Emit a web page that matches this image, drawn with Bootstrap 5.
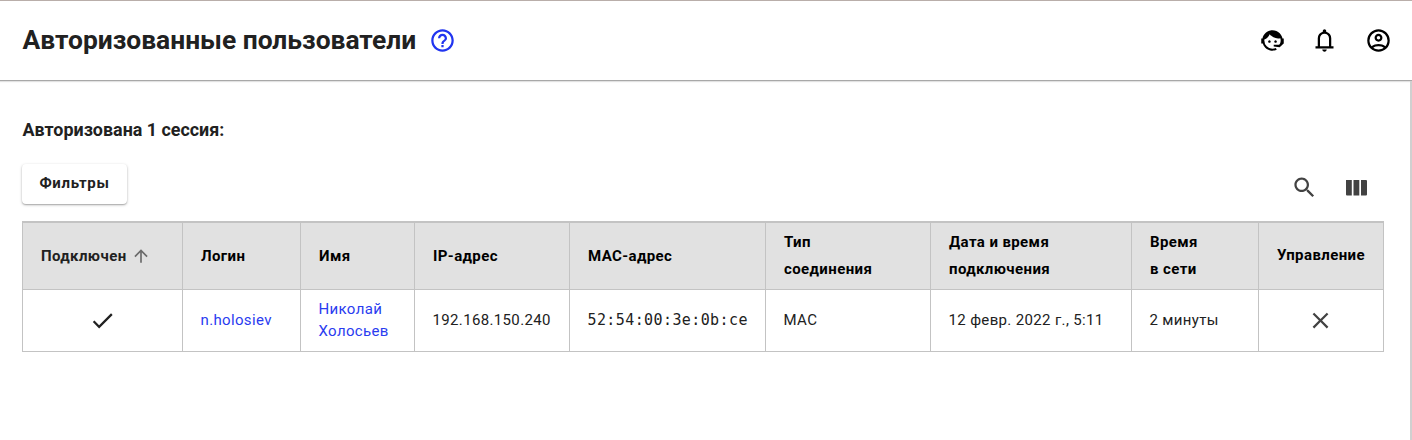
<!DOCTYPE html>
<html lang="ru">
<head>
<meta charset="utf-8">
<title>Авторизованные пользователи</title>
<link href="https://cdn.jsdelivr.net/npm/bootstrap@5.3.0/dist/css/bootstrap.min.css" rel="stylesheet">
<style>
body{font-family:Roboto,sans-serif;font-size:15px;color:#212121;background:#fff;min-height:440px;overflow:hidden;letter-spacing:.4px}
.topbar{height:81px;border-top:1px solid #b9aeaa;border-bottom:1px solid #a8a8a8;box-shadow:0 1px 1px #e2e2e2;padding:0 20px 0 22.5px}
.page-title{font-size:26.4px;font-weight:700;letter-spacing:0;line-height:32px;padding-bottom:2px}
.ico{width:27px;height:27px;fill:currentColor;display:block;flex:none}
.content-area{height:359px;border-right:2px solid #d0d0d0;padding:37px 26px 0 22px}
.session-title{font-size:17.9px;font-weight:700;letter-spacing:0;line-height:24px;padding-left:.5px}
.btn-filter{height:40px;width:105px;font-size:15px;font-weight:700;letter-spacing:.7px;line-height:20px;padding:0 0 2px;border:0;border-radius:4px;background:#fff;color:#212121;box-shadow:0 1px 3px rgba(0,0,0,.26),0 1px 1px rgba(0,0,0,.16)}
.tools{gap:25px;color:#424242;padding-right:14px;padding-top:7px}
.sessions{width:1362px;table-layout:fixed;border-collapse:separate;border-spacing:0;border-top:1px solid #c3c3c3}
.sessions th,.sessions td{border-left:1px solid #c3c3c3;border-bottom:1px solid #c3c3c3;padding:0 0 0 17.5px;vertical-align:middle}
.sessions th:last-child,.sessions td:last-child{border-right:1px solid #c3c3c3}
.sessions th{height:68px;border-top:1px solid #c3c3c3;background:#e1e1e1;color:#000;font-weight:700;line-height:27px;letter-spacing:.4px;padding-left:18px}
.sessions th:last-child{padding-bottom:2px}
.sessions td{height:62px;line-height:22px;padding-bottom:2px;letter-spacing:.35px}
.sessions a{color:#2a3cf0;text-decoration:none}
.sessions .mac-addr{font-family:"DejaVu Sans Mono",monospace;letter-spacing:.4px}
.blue{color:#2135f0;margin-left:13px}
</style>
</head>
<body>
<header class="topbar d-flex align-items-center justify-content-between">
  <div class="d-flex align-items-center">
    <h1 class="page-title mb-0">Авторизованные пользователи</h1>
    <svg class="ico blue" viewBox="0 0 24 24"><path d="M11 18h2v-2h-2v2zm1-16C6.48 2 2 6.48 2 12s4.480 10 10 10 10-4.480 10-10S17.520 2 12 2zm0 18c-4.410 0-8-3.590-8-8s3.590-8 8-8 8 3.590 8 8-3.590 8-8 8zm0-14c-2.210 0-4 1.790-4 4h2c0-1.100.9-2 2-2s2 .9 2 2c0 2-3 1.750-3 5h2c0-2.250 3-2.500 3-5 0-2.210-1.790-4-4-4z"/></svg>
  </div>
  <div class="d-flex align-items-center text-black">
    <svg class="ico" style="margin-right:25px" viewBox="0 0 24 24"><path d="M18.720 14.760C19.070 13.910 19.260 13 19.260 12C19.260 11.280 19.150 10.590 18.960 9.950C18.310 10.100 17.630 10.180 16.920 10.180C13.860 10.180 11.150 8.670 9.500 6.340C8.610 8.500 6.910 10.260 4.770 11.220C4.730 11.470 4.730 11.740 4.730 12A7.270 7.270 0 0 0 12 19.270C13.050 19.270 14.060 19.040 14.970 18.630C15.540 19.720 15.800 20.260 15.780 20.260C14.140 20.810 12.870 21.080 12 21.080C9.580 21.080 7.270 20.130 5.570 18.420C4.530 17.380 3.760 16.110 3.330 14.730H2V10.180H3.090C3.930 6.040 7.600 2.920 12 2.920C14.400 2.920 16.710 3.870 18.420 5.580C19.690 6.840 20.540 8.450 20.890 10.180H22V14.730H21.940L18.380 18L13.080 17.400V15.730H17.910L18.720 14.760M9.270 11.770A1.140 1.140 0 1 1 9.260 11.770M14.720 11.770A1.140 1.140 0 1 1 14.710 11.770Z"/></svg>
    <svg class="ico" style="margin-right:27px" viewBox="0 0 24 24"><path d="M4 19v-2h2v-7q0-2.075 1.250-3.687Q8.500 4.700 10.500 4.200v-.7q0-.625.438-1.062Q11.375 2 12 2t1.062.438q.438.437.438 1.062v.7q2 .5 3.250 2.113Q18 7.925 18 10v7h2v2Zm8 3q-.825 0-1.412-.587Q10 20.825 10 20h4q0 .825-.587 1.413Q12.825 22 12 22Zm-4-5h8v-7q0-1.650-1.175-2.825Q13.650 6 12 6q-1.650 0-2.825 1.175Q8 8.350 8 10Z"/></svg>
    <svg class="ico" viewBox="0 0 24 24"><path d="M5.850 17.100q1.275-.975 2.850-1.538Q10.275 15 12 15t3.300.562q1.575.563 2.850 1.538.875-1.025 1.363-2.325Q20 13.475 20 12q0-3.325-2.337-5.663Q15.325 4 12 4T6.338 6.337Q4 8.675 4 12q0 1.475.488 2.775.487 1.300 1.362 2.325ZM12 13q-1.475 0-2.488-1.012Q8.500 10.975 8.500 9.500t1.012-2.488Q10.525 6 12 6t2.488 1.012Q15.500 8.025 15.500 9.500t-1.012 2.488Q13.475 13 12 13Zm0 9q-2.075 0-3.900-.788-1.825-.787-3.175-2.137-1.350-1.350-2.137-3.175Q2 14.075 2 12t.788-3.900q.787-1.825 2.137-3.175 1.350-1.350 3.175-2.138Q9.925 2 12 2t3.900.787q1.825.788 3.175 2.138 1.350 1.350 2.137 3.175Q22 9.925 22 12t-.788 3.900q-.787 1.825-2.137 3.175-1.350 1.350-3.175 2.137Q14.075 22 12 22Zm0-2q1.325 0 2.500-.388 1.175-.387 2.150-1.112-.975-.725-2.150-1.113Q13.325 17 12 17t-2.500.387q-1.175.388-2.150 1.113.975.725 2.150 1.112Q10.675 20 12 20Zm0-9q.65 0 1.075-.425.425-.425.425-1.075 0-.65-.425-1.075Q12.650 8 12 8q-.65 0-1.075.425Q10.500 8.850 10.500 9.500q0 .65.425 1.075Q11.350 11 12 11Z"/></svg>
  </div>
</header>
<main class="content-area">
  <h2 class="session-title mb-0">Авторизована 1 сессия:</h2>
  <div class="d-flex justify-content-between align-items-center" style="margin:22px 0 17px">
    <button class="btn btn-filter" type="button">Фильтры</button>
    <div class="tools d-flex align-items-center">
      <svg class="ico" viewBox="0 0 24 24"><path d="M15.500 14h-.79l-.28-.27C15.410 12.590 16 11.110 16 9.500 16 5.910 13.090 3 9.500 3S3 5.910 3 9.500 5.910 16 9.500 16c1.610 0 3.090-.59 4.230-1.570l.27.28v.79l5 4.990L20.490 19l-4.990-5zm-6 0C7.010 14 5 11.990 5 9.500S7.010 5 9.500 5 14 7.010 14 9.500 11.990 14 9.500 14z"/></svg>
      <svg class="ico" viewBox="0 0 27 27"><path d="M3 6h5.800v15.500H4a1 1 0 0 1-1-1zM10.500 6h5.800v15.500h-5.800zM18 6h5a1 1 0 0 1 1 1v13.500a1 1 0 0 1-1 1h-5z"/></svg>
    </div>
  </div>
  <table class="sessions">
    <colgroup><col style="width:160px"><col style="width:118px"><col style="width:114px"><col style="width:155px"><col style="width:196px"><col style="width:165px"><col style="width:201px"><col style="width:127px"><col style="width:126px"></colgroup>
    <thead><tr>
      <th><div class="d-flex align-items-center" style="color:#212121">Подключен<svg class="ms-1" width="20" height="20" viewBox="0 0 24 24" fill="#6b6b6b"><path d="M4 12l1.410 1.410L11 7.830V20h2V7.830l5.580 5.590L20 12l-8-8z"/></svg></div></th>
      <th>Логин</th><th>Имя</th><th>IP-адрес</th><th>MAC-адрес</th><th>Тип<br>соединения</th><th>Дата и время<br>подключения</th><th>Время<br>в сети</th><th>Управление</th>
    </tr></thead>
    <tbody><tr>
      <td class="p-0"><svg class="ico mx-auto" viewBox="0 0 24 24"><path d="M9 16.170L4.830 12l-1.420 1.410L9 19 21 7l-1.410-1.410z"/></svg></td>
      <td><a href="#">n.holosiev</a></td>
      <td><a href="#">Николай<br>Холосьев</a></td>
      <td>192.168.150.240</td>
      <td class="mac-addr">52:54:00:3e:0b:ce</td>
      <td>MAC</td>
      <td>12 февр. 2022 г., 5:11</td>
      <td>2 минуты</td>
      <td style="padding:0 1px 0 0"><svg class="ico mx-auto" style="color:#424242" viewBox="0 0 24 24"><path d="M19 6.410L17.590 5 12 10.590 6.410 5 5 6.410 10.590 12 5 17.590 6.410 19 12 13.410 17.590 19 19 17.590 13.410 12z"/></svg></td>
    </tr></tbody>
  </table>
</main>
<script src="https://cdn.jsdelivr.net/npm/bootstrap@5.3.0/dist/js/bootstrap.bundle.min.js"></script>
</body>
</html>
